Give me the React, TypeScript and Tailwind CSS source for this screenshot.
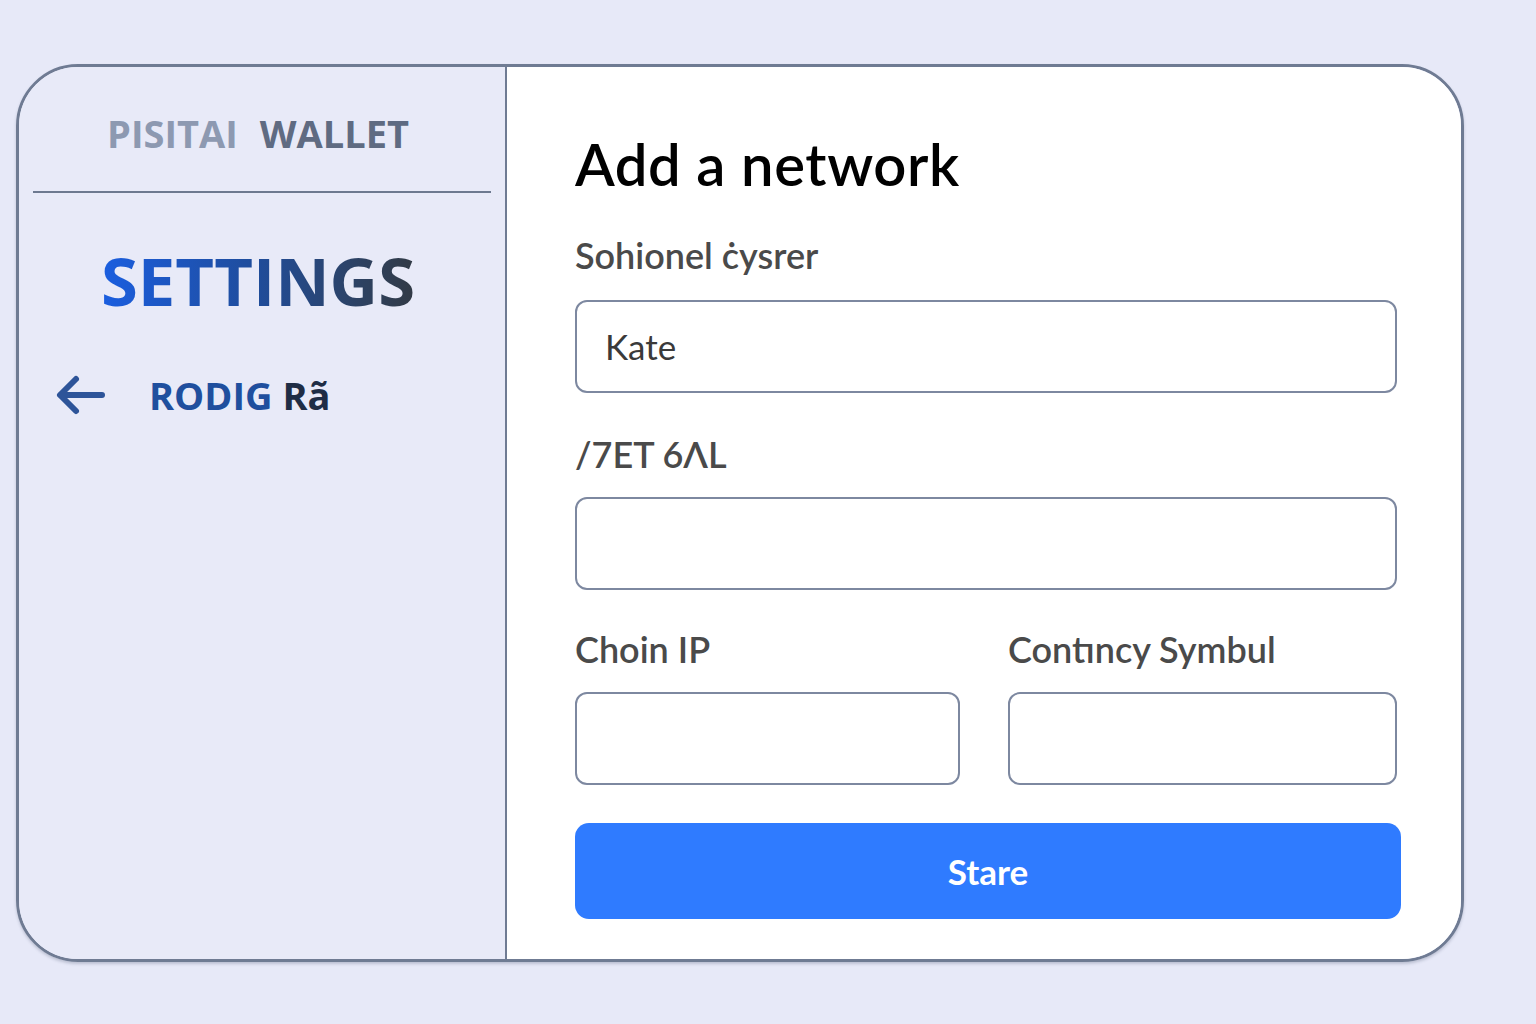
const field =
  "h-[93px] w-full rounded-xl border-2 border-[#7d88a0] bg-white px-7 flex items-center text-[35px] text-[#3a3a3a]";

function Label({ children }: { children: React.ReactNode }) {
  return <p className="text-[36px] leading-none font-semibold text-[#4a4a4a]">{children}</p>;
}

function BackArrow() {
  return (
    <svg width="52" height="42" viewBox="0 0 52 42" fill="none" stroke="#2d5499" strokeWidth="6" strokeLinecap="round" strokeLinejoin="round">
      <path d="M47 21H6" />
      <path d="M21 5L5 21l16 16" />
    </svg>
  );
}

export default function App() {
  return (
    <div className="min-h-screen w-full bg-[#e7e9f8] pt-[64px] pl-[16px]" style={{ fontFamily: "Lato, 'Open Sans', sans-serif" }}>
      <div className="w-[1448px] h-[898px] rounded-[62px] border-[3px] border-[#6f7b93] overflow-hidden flex shadow-[0_2px_3px_rgba(60,70,100,0.25)]">
        {/* Sidebar */}
        <div className="w-[488px] shrink-0 bg-[#e8eaf8] border-r-2 border-[#6f7b93] flex flex-col">
          <div className="h-[124px] flex items-end justify-center pb-[39px] pr-[8px]">
            <p className="text-[38px] leading-none font-bold" style={{ fontFamily: "'Open Sans', sans-serif" }}>
              <span className="text-[#8d99b1]">PISITAI</span>
              <span className="text-[#5f6b82] ml-[22px]">WALLET</span>
            </p>
          </div>
          <div className="mx-[14px] h-[2px] bg-[#6d7990]" />
          <div className="mt-[54px] flex justify-center pr-[8px]">
            <p
              className="text-[67px] leading-none font-bold bg-gradient-to-r from-[#1a5ee0] via-[#1f4c9a] to-[#323a45] bg-clip-text text-transparent"
              style={{ fontFamily: "'Open Sans', sans-serif" }}
            >
              SETTINGS
            </p>
          </div>
          <div className="mt-[60px] ml-[36px] flex items-center gap-[42px]">
            <BackArrow />
            <p className="text-[38px] leading-none font-bold text-[#1f4f9e]" style={{ fontFamily: "'Open Sans', sans-serif" }}>
              RODIG <span className="text-[#1f2d45]">Rã</span>
            </p>
          </div>
        </div>

        {/* Main form */}
        <div className="flex-1 bg-white pl-[68px] pr-[64px] pt-[68px]">
          <h1 className="text-[58px] leading-none font-semibold text-black tracking-[0.01em]">Add a network</h1>
          <div className="mt-[44px]">
            <Label>Sohionel ċysrer</Label>
          </div>
          <div className={`mt-[27px] ${field}`}>Kate</div>
          <div className="mt-[43px]">
            <Label>/7ET 6ɅL</Label>
          </div>
          <div className={`mt-[25px] ${field}`} />
          <div className="mt-[41px] grid grid-cols-[385px_1fr] gap-x-[48px]">
            <div>
              <Label>Choin IP</Label>
              <div className="mt-[25px] h-[93px] rounded-xl border-2 border-[#7d88a0] bg-white" />
            </div>
            <div>
              <Label>Contıncy Symbul</Label>
              <div className="mt-[25px] h-[93px] rounded-xl border-2 border-[#7d88a0] bg-white" />
            </div>
          </div>
          <button className="mt-[38px] h-[96px] w-[calc(100%+4px)] rounded-[14px] bg-[#2f7bff] text-white text-[35px] font-bold">
            Stare
          </button>
        </div>
      </div>
    </div>
  );
}
